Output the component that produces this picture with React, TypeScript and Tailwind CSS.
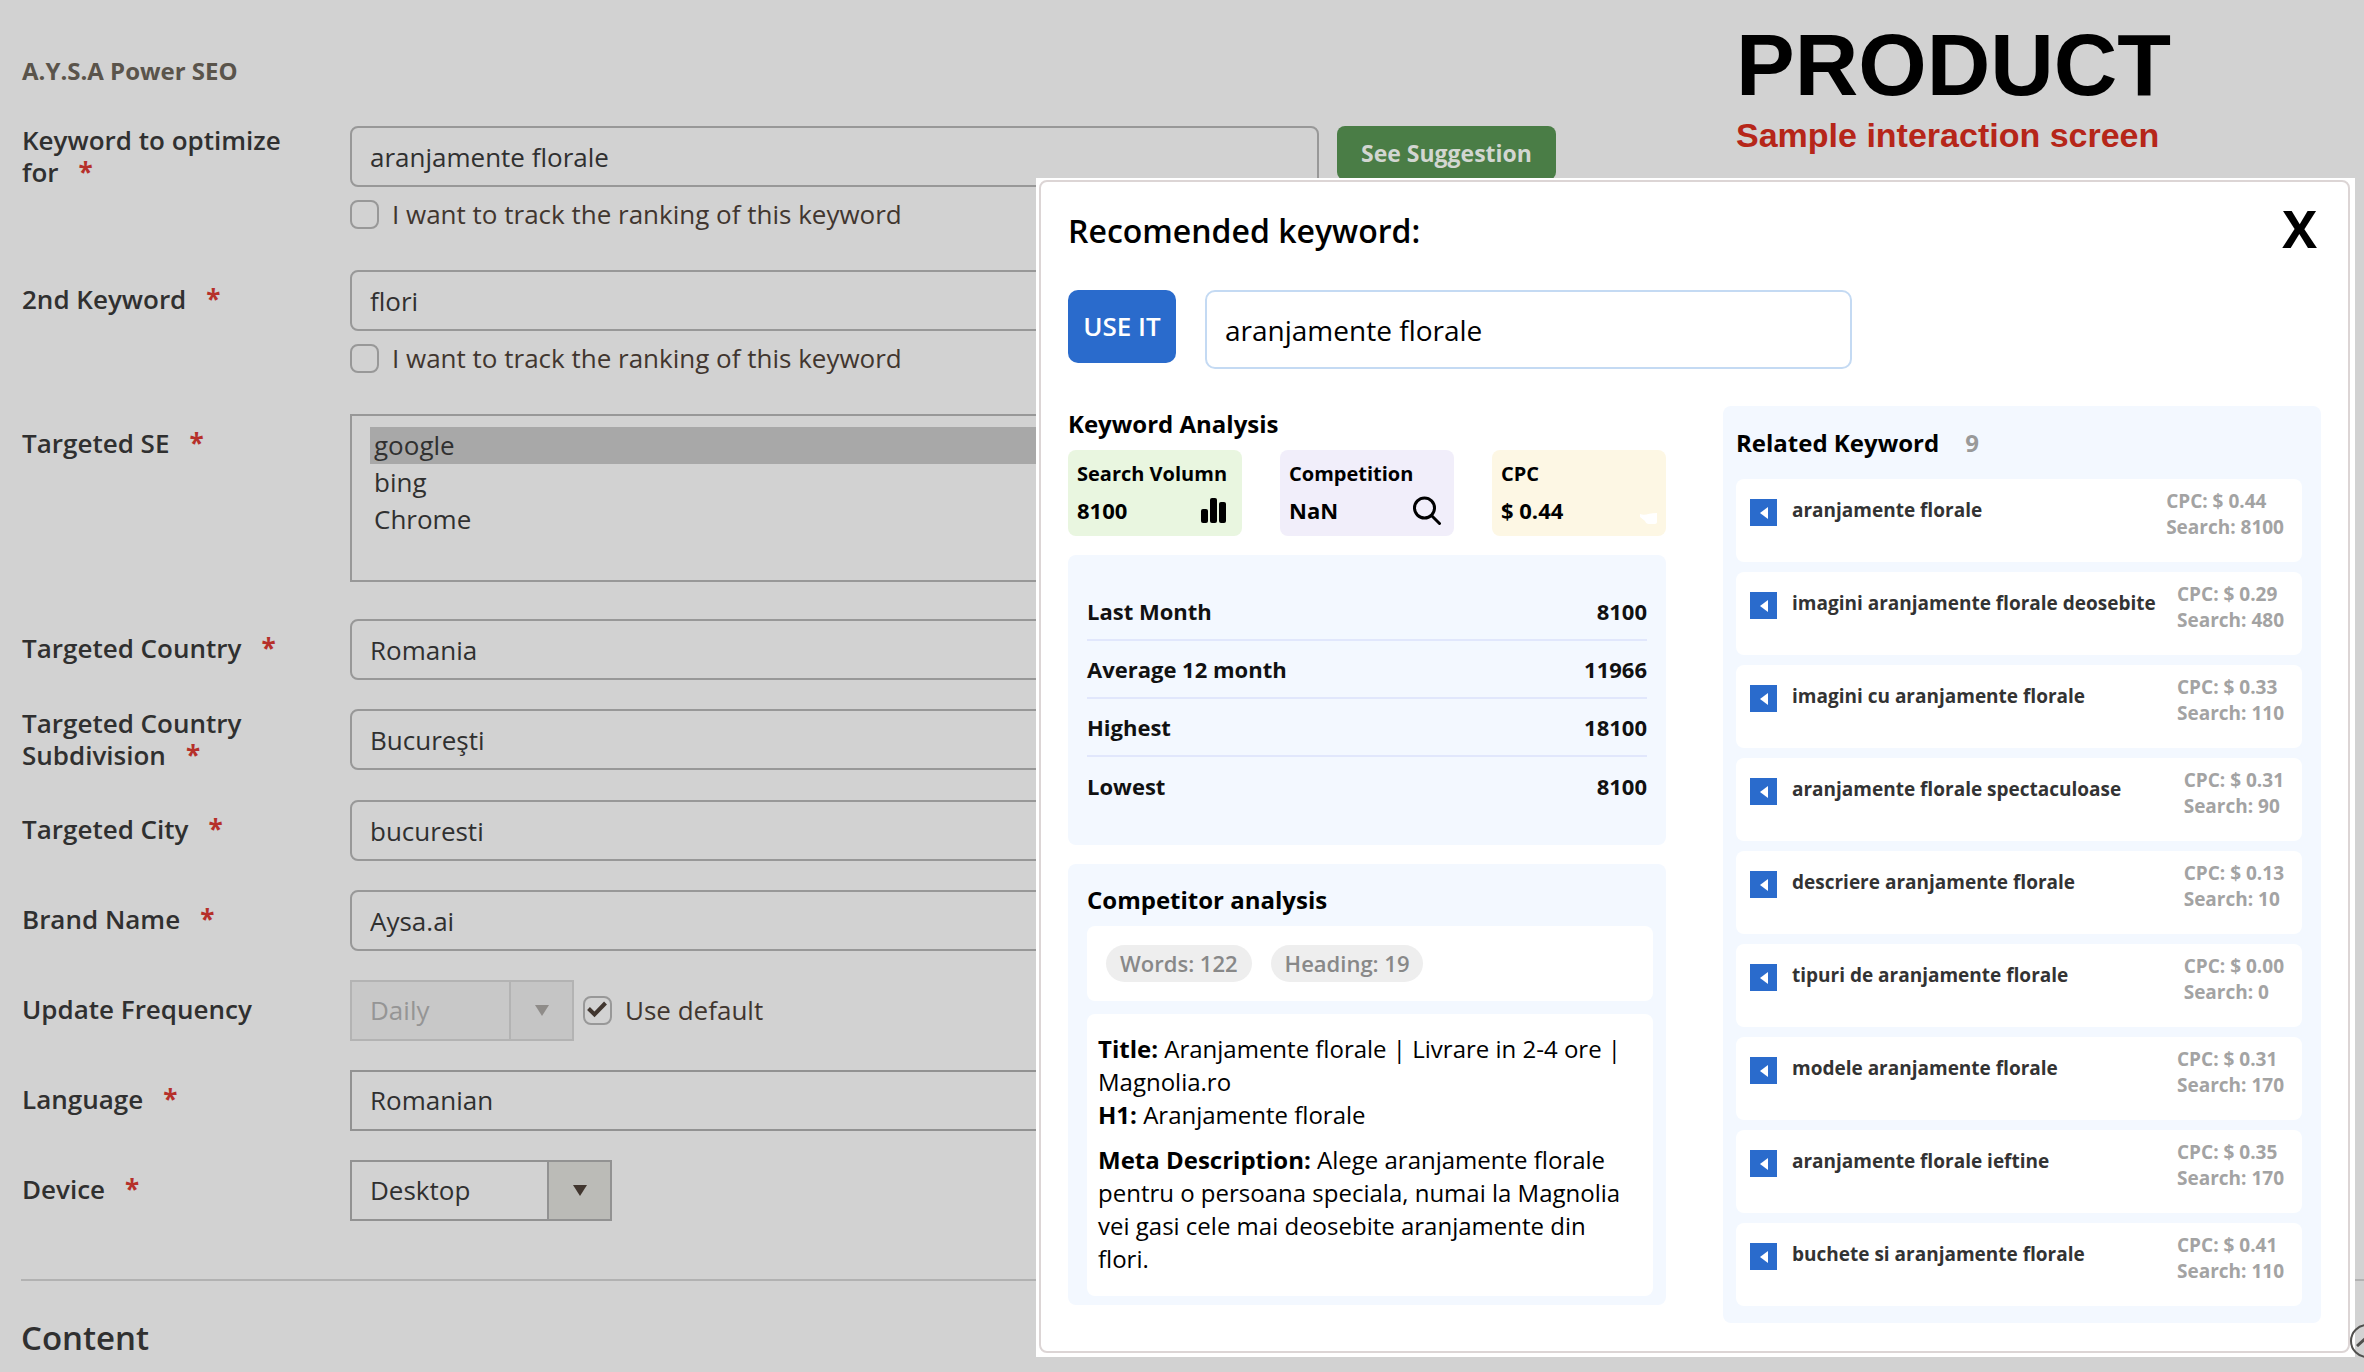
import React from 'react';

interface RelatedKeyword {
  keyword: string;
  cpc: string;
  search: number;
}

const relatedKeywords: RelatedKeyword[] = [
  { keyword: 'aranjamente florale', cpc: '0.44', search: 8100 },
  { keyword: 'imagini aranjamente florale deosebite', cpc: '0.29', search: 480 },
  { keyword: 'imagini cu aranjamente florale', cpc: '0.33', search: 110 },
  { keyword: 'aranjamente florale spectaculoase', cpc: '0.31', search: 90 },
  { keyword: 'descriere aranjamente florale', cpc: '0.13', search: 10 },
  { keyword: 'tipuri de aranjamente florale', cpc: '0.00', search: 0 },
  { keyword: 'modele aranjamente florale', cpc: '0.31', search: 170 },
  { keyword: 'aranjamente florale ieftine', cpc: '0.35', search: 170 },
  { keyword: 'buchete si aranjamente florale', cpc: '0.41', search: 110 },
];

const history = [
  { label: 'Last Month', value: 8100 },
  { label: 'Average 12 month', value: 11966 },
  { label: 'Highest', value: 18100 },
  { label: 'Lowest', value: 8100 },
];

interface FieldProps {
  id: string;
  label: string;
  required?: boolean;
  twoLines?: boolean;
  children: React.ReactNode;
}

const Field: React.FC<FieldProps> = ({ id, label, required, twoLines, children }) => (
  <div className="flex items-start">
    <label
      htmlFor={id}
      className={`w-[328px] shrink-0 pr-10 font-semibold leading-[32px] ${twoLines ? '-mt-0.5' : 'pt-[13px]'}`}
    >
      {label}
      {required && <span className="ml-5 font-bold text-[#b6302a]">*</span>}
    </label>
    <div className="min-w-0 flex-1">{children}</div>
  </div>
);

const TextInput: React.FC<{ id: string; value: string }> = ({ id, value }) => (
  <input
    id={id}
    type="text"
    defaultValue={value}
    className="block h-[61px] w-full max-w-[969px] rounded-lg border-2 border-[#989898] bg-transparent px-[18px] outline-none"
  />
);

const Checkbox: React.FC<{ label: string; checked?: boolean }> = ({ label, checked }) => (
  <label className="flex items-center gap-[13px] text-[#41362f]">
    <span className="grid size-[29px] shrink-0">
      <input
        type="checkbox"
        defaultChecked={checked}
        className="peer col-start-1 row-start-1 size-[29px] appearance-none rounded-lg border-2 border-[#989898]"
      />
      <svg
        viewBox="0 0 29 29"
        className="pointer-events-none invisible col-start-1 row-start-1 size-[29px] peer-checked:visible"
        fill="none"
        stroke="#41362f"
        strokeWidth="4"
      >
        <path d="M5.5 12.5l6 6L22.5 7" />
      </svg>
    </span>
    {label}
  </label>
);

interface SelectBoxProps {
  id: string;
  value: string;
  width: string;
  disabled?: boolean;
}

const SelectBox: React.FC<SelectBoxProps> = ({ id, value, width, disabled }) => (
  <div
    className={`flex h-[61px] border-2 ${width} ${
      disabled ? 'border-[#b3b3b3] bg-[#c8c8c8] text-[#959595]' : 'border-[#929292]'
    }`}
  >
    <select id={id} disabled={disabled} className="min-w-0 flex-1 appearance-none bg-transparent px-[18px] outline-none">
      <option>{value}</option>
    </select>
    <span
      className={`flex w-[63px] items-center justify-center border-l-2 ${
        disabled ? 'border-[#b3b3b3] bg-[#c5c5c5] text-[#8f8c89]' : 'border-[#929292] bg-[#bbbbb7] text-[#41362f]'
      }`}
    >
      <svg viewBox="0 0 14 11" width="14" height="11" fill="currentColor">
        <path d="M0 0h14L7 11z" />
      </svg>
    </span>
  </div>
);

interface StatCardProps {
  label: string;
  value: string;
  color: string;
  children: React.ReactNode;
}

const StatCard: React.FC<StatCardProps> = ({ label, value, color, children }) => (
  <div className={`h-[86px] w-[174px] rounded-lg px-[9px] pt-[9px] font-bold leading-[30px] ${color}`}>
    <div className="whitespace-nowrap text-[20px]">{label}</div>
    <div className="mt-[6px] flex items-center justify-between text-[22px]">
      {value}
      {children}
    </div>
  </div>
);

const SuggestionModal: React.FC = () => (
  <div
    role="dialog"
    aria-labelledby="modal-title"
    className="absolute left-[1036px] right-[9px] top-[178px] bg-white pb-1 pl-[3px] pr-[5px] pt-0.5 text-black"
  >
    <div className="rounded-lg border-2 border-[#dcd5d5] px-[27px] pb-7 pt-[27px]">
      {/* Header */}
      <div className="flex items-start justify-between">
        <h2 id="modal-title" className="text-[32px] font-semibold leading-[44px]">
          Recomended keyword:
        </h2>
        <button type="button" aria-label="Close" className="pr-1 text-[52px] font-bold leading-[38px]">
          X
        </button>
      </div>

      <div className="mt-[37px] flex items-start gap-[29px]">
        <button
          type="button"
          className="h-[73px] w-[108px] rounded-[10px] bg-[#2a6bcc] text-[26px] font-semibold text-white"
        >
          USE IT
        </button>
        <input
          type="text"
          aria-label="Recomended keyword"
          defaultValue="aranjamente florale"
          className="h-[79px] w-[647px] rounded-[10px] border-2 border-[#c4daf3] px-[18px] text-[28px] outline-none"
        />
      </div>

      <div className="mt-[37px] grid grid-cols-2 items-start gap-[57px] text-[24px]">
        {/* Keyword analysis */}
        <div>
          <h3 className="font-bold leading-[36px]">Keyword Analysis</h3>
          <div className="mt-2 flex justify-between">
            <StatCard label="Search Volumn" value="8100" color="bg-[#e9f6e0]">
              <svg viewBox="0 0 26 25" width="26" height="25" className="mr-[6px]">
                <rect x="0" y="11" width="7" height="14" rx="2" />
                <rect x="9" y="0" width="7" height="25" rx="2" />
                <rect x="18" y="4" width="7" height="21" rx="2" />
              </svg>
            </StatCard>
            <StatCard label="Competition" value="NaN" color="bg-[#f1eefa]">
              <svg
                viewBox="0 0 30 29"
                width="30"
                height="29"
                fill="none"
                stroke="black"
                strokeWidth="3"
                strokeLinecap="round"
                className="mr-[3px]"
              >
                <circle cx="12.5" cy="12" r="10" />
                <path d="M19.5 19.5l8 8" />
              </svg>
            </StatCard>
            <StatCard label="CPC" value="$ 0.44" color="bg-[#fdf7e4]">
              <svg viewBox="0 0 17 11" width="17" height="11" fill="white" className="mt-4">
                <path d="M0 1C5 3 9 0 17 0v9q0 2-2 2H9Q6 11 5 8L0 4z" />
              </svg>
            </StatCard>
          </div>

          <div className="mt-[19px] rounded-lg bg-[#f3f8ff] px-[19px] pb-[30px] pt-7">
            <table className="w-full border-separate border-spacing-0 text-[22px] font-bold text-[#111]">
              <tbody>
                {history.map((row) => (
                  <tr key={row.label} className="group">
                    <th
                      scope="row"
                      className="h-[58px] border-b-2 border-[#e1e7fc] p-0 text-left leading-[32px] group-last:border-0"
                    >
                      {row.label}
                    </th>
                    <td className="h-[58px] border-b-2 border-[#e1e7fc] p-0 text-right leading-[32px] group-last:border-0">
                      {row.value}
                    </td>
                  </tr>
                ))}
              </tbody>
            </table>
          </div>

          <div className="mt-[19px] rounded-lg bg-[#f3f8ff] pb-[9px] pl-[19px] pr-[13px] pt-[18px]">
            <h3 className="font-bold leading-[36px]">Competitor analysis</h3>
            <div className="mt-2 flex gap-[19px] rounded-lg bg-white p-[19px] text-[22px] font-semibold leading-[37px] text-[#888]">
              <span className="rounded-full bg-[#eee] px-[14px]">Words: 122</span>
              <span className="rounded-full bg-[#eee] px-[14px]">Heading: 19</span>
            </div>
            <div className="mt-[13px] rounded-lg bg-white pb-[21px] pl-[11px] pr-4 pt-[18px] leading-[33px]">
              <p>
                <strong>Title:</strong> Aranjamente florale | Livrare in 2-4 ore | Magnolia.ro
              </p>
              <p>
                <strong>H1:</strong> Aranjamente florale
              </p>
              <p className="mt-3">
                <strong>Meta Description:</strong> Alege aranjamente florale pentru o persoana speciala, numai la
                Magnolia vei gasi cele mai deosebite aranjamente din flori.
              </p>
            </div>
          </div>
        </div>

        {/* Related keywords */}
        <div className="rounded-lg bg-[#f3f8ff] pb-[17px] pl-[13px] pr-[19px] pt-[19px]">
          <h3 className="font-bold leading-[36px]">
            Related Keyword <span className="ml-5 text-[#999]">9</span>
          </h3>
          <ul className="mt-[18px] flex flex-col gap-[10px] text-[19px] font-bold">
            {relatedKeywords.map((item) => (
              <li key={item.keyword} className="flex h-[83px] items-start rounded-lg bg-white pl-[14px] pr-[18px]">
                <button
                  type="button"
                  aria-label={`Use ${item.keyword}`}
                  className="mt-5 flex size-[27px] shrink-0 items-center justify-center bg-[#2a6bcc]"
                >
                  <svg viewBox="0 0 8 12" width="8" height="12" fill="white">
                    <path d="M8 0v12L0 6z" />
                  </svg>
                </button>
                <span className="ml-[15px] mt-[17px] flex-1 whitespace-nowrap leading-[28px] text-[#333]">
                  {item.keyword}
                </span>
                <span className="mt-[9px] whitespace-nowrap leading-[26px] text-[#a3a3a3]">
                  CPC: $ {item.cpc}
                  <br />
                  Search: {item.search}
                </span>
              </li>
            ))}
          </ul>
        </div>
      </div>
    </div>
  </div>
);

const App: React.FC = () => {
  return (
    <div className="relative min-h-screen overflow-hidden bg-[#d2d2d2] font-['Open_Sans',sans-serif] text-[26px] text-[#303030]">
      <div className="flex">
        <form className="min-w-0 flex-1 pl-[22px] pt-[55px]">
          <h2 className="text-[24px] font-bold leading-[31px] text-[#5a544b]">A.Y.S.A Power SEO</h2>

          <div className="mt-10 flex flex-col gap-[29px]">
            <Field id="keyword" label="Keyword to optimize for" required twoLines>
              <div className="flex gap-[18px]">
                <div className="w-[969px]">
                  <TextInput id="keyword" value="aranjamente florale" />
                </div>
                <button
                  type="button"
                  className="h-[54px] w-[219px] rounded-lg bg-[#4a7d46] text-[23px] font-bold text-[#d2d6d1]"
                >
                  See Suggestion
                </button>
              </div>
              <div className="pb-3 pt-[13px] leading-[29px]">
                <Checkbox label="I want to track the ranking of this keyword" />
              </div>
            </Field>

            <Field id="keyword-2" label="2nd Keyword" required>
              <TextInput id="keyword-2" value="flori" />
              <div className="pb-3 pt-[13px] leading-[29px]">
                <Checkbox label="I want to track the ranking of this keyword" />
              </div>
            </Field>

            <Field id="targeted-se" label="Targeted SE" required>
              <select
                id="targeted-se"
                multiple
                size={4}
                defaultValue={['google']}
                className="mb-2 block h-[168px] w-full max-w-[969px] appearance-none overflow-hidden border-2 border-[#989898] bg-transparent px-[18px] py-[11px] outline-none"
              >
                {['google', 'bing', 'Chrome'].map((name) => (
                  <option
                    key={name}
                    value={name}
                    className="h-[37px] px-1 py-0 leading-[37px] text-[#303030] checked:bg-[linear-gradient(#a8a8a8,#a8a8a8)]"
                  >
                    {name}
                  </option>
                ))}
              </select>
            </Field>

            <Field id="country" label="Targeted Country" required>
              <TextInput id="country" value="Romania" />
            </Field>
            <Field id="subdivision" label="Targeted Country Subdivision" required twoLines>
              <TextInput id="subdivision" value="Bucureşti" />
            </Field>
            <Field id="city" label="Targeted City" required>
              <TextInput id="city" value="bucuresti" />
            </Field>
            <Field id="brand" label="Brand Name" required>
              <TextInput id="brand" value="Aysa.ai" />
            </Field>
            <Field id="frequency" label="Update Frequency">
              <div className="flex items-center gap-[9px]">
                <SelectBox id="frequency" value="Daily" width="w-[224px]" disabled />
                <Checkbox label="Use default" checked />
              </div>
            </Field>
            <Field id="language" label="Language" required>
              <SelectBox id="language" value="Romanian" width="w-[969px]" />
            </Field>
            <Field id="device" label="Device" required>
              <SelectBox id="device" value="Desktop" width="w-[262px]" />
            </Field>
          </div>
        </form>

        <header className="w-[628px] shrink-0 pt-[19px] font-['Liberation_Sans',sans-serif] font-bold">
          <h1 className="text-[88px] leading-[92px] text-black">PRODUCT</h1>
          <p className="text-[34px] leading-[48px] text-[#b62619]">Sample interaction screen</p>
        </header>
      </div>

      {/* Next collapsible section */}
      <section className="relative ml-[21px] mt-[58px] border-t-2 border-[#b2b2b2] pt-[35px]">
        <h2 className="pb-3 text-[33px] font-semibold leading-[44px]">Content</h2>
        <button
          type="button"
          aria-label="Toggle content section"
          className="absolute -right-5 top-[43px] z-10 flex size-[34px] items-center justify-center rounded-full border-2 border-[#51504e]"
        >
          <svg viewBox="0 0 22 12" width="22" height="12" fill="none" stroke="#51504e" strokeWidth="3">
            <path d="M1 11L11 2l10 9" />
          </svg>
        </button>
      </section>

      <SuggestionModal />
    </div>
  );
};

export default App;
